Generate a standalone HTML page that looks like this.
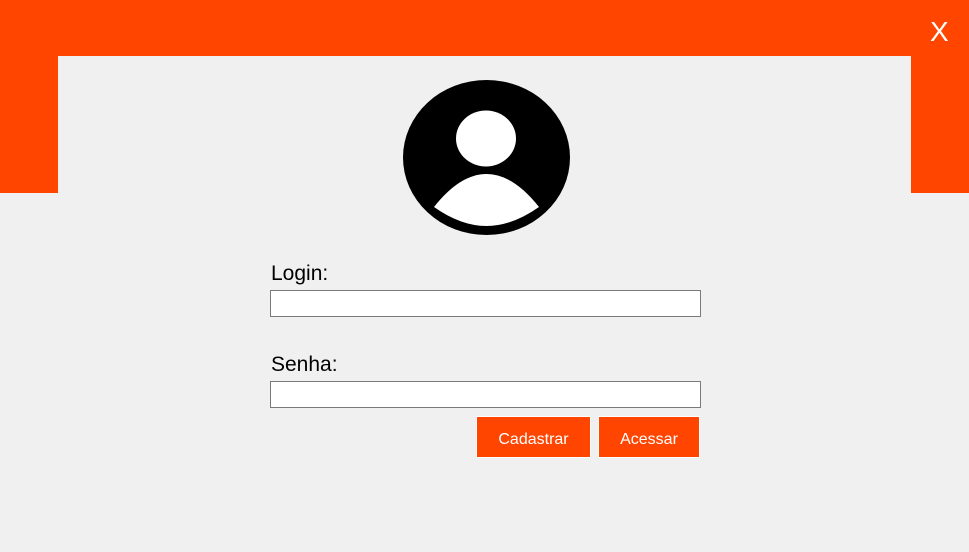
<!DOCTYPE html>
<html><head><meta charset="utf-8"><style>
body{margin:0;width:969px;height:552px;background:#f0f0f0;position:relative;overflow:hidden;font-family:"Liberation Sans",sans-serif}
.top{position:absolute;left:0;top:0;width:969px;height:56px;background:#ff4500}
.l{position:absolute;left:0;top:56px;width:58px;height:137px;background:#ff4500}
.r{position:absolute;left:911px;top:56px;width:58px;height:137px;background:#ff4500}
.x{position:absolute;left:930px;top:16px;color:#fff;font-size:28px}
.lab{position:absolute;left:271px;font-size:21px;color:#000}
.in{position:absolute;left:270px;width:429px;height:25px;background:#fff;border:1px solid #7a7a7a}
.btn{position:absolute;top:416px;height:40px;background:#ff4500;border:1px solid #fff;color:#fff;font-size:16px;text-align:center;line-height:45px}
</style></head><body>
<div class="top"></div><div class="l"></div><div class="r"></div>
<div class="x">X</div>
<svg style="position:absolute;left:0;top:0" width="969" height="552">
<ellipse cx="486.5" cy="157.5" rx="83.5" ry="77.5" fill="#000"/>
<ellipse cx="486" cy="138.5" rx="30" ry="28" fill="#fff"/>
<path d="M434 207 Q460 174 486.5 174 Q513 174 539 207 Q512 226 486.5 226 Q461 226 434 207 Z" fill="#fff"/>
</svg>
<div class="lab" style="top:262px">Login:</div>
<div class="in" style="top:290px"></div>
<div class="lab" style="top:353px">Senha:</div>
<div class="in" style="top:381px"></div>
<div class="btn" style="left:476px;width:113px">Cadastrar</div>
<div class="btn" style="left:598px;width:100px">Acessar</div>
</body></html>
